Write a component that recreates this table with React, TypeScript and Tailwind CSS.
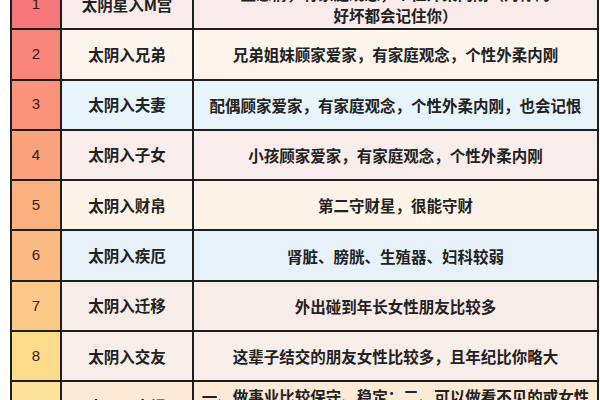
const rows = [
  {
    n: "1",
    num: "bg-[#f7787a]",
    bg: "bg-[#f9ebea]",
    name: "太阴星入M宫",
    desc: ["重感情，有家庭观念，个性外柔内刚（对你的", "好坏都会记住你）"],
  },
  { n: "2", num: "bg-[#f8877b]", bg: "bg-[#fdf4ed]", name: "太阴入兄弟", desc: ["兄弟姐妹顾家爱家，有家庭观念，个性外柔内刚"] },
  { n: "3", num: "bg-[#f9937a]", bg: "bg-[#e8f4fb]", name: "太阴入夫妻", desc: ["配偶顾家爱家，有家庭观念，个性外柔内刚，也会记恨"] },
  { n: "4", num: "bg-[#f9a27c]", bg: "bg-[#f8edeb]", name: "太阴入子女", desc: ["小孩顾家爱家，有家庭观念，个性外柔内刚"] },
  { n: "5", num: "bg-[#fbb07f]", bg: "bg-[#fdf3e8]", name: "太阴入财帛", desc: ["第二守财星，很能守财"] },
  { n: "6", num: "bg-[#fbbb82]", bg: "bg-[#e6f1fa]", name: "太阴入疾厄", desc: ["肾脏、膀胱、生殖器、妇科较弱"] },
  { n: "7", num: "bg-[#fcc887]", bg: "bg-[#f8ece9]", name: "太阴入迁移", desc: ["外出碰到年长女性朋友比较多"] },
  { n: "8", num: "bg-[#fbdc8a]", bg: "bg-[#f8eee9]", name: "太阴入交友", desc: ["这辈子结交的朋友女性比较多，且年纪比你略大"] },
  {
    n: "9",
    num: "bg-[#fce39c]",
    bg: "bg-[#fcead5]",
    name: "太阴入官禄",
    desc: ["一、做事业比较保守、稳定；二、可以做看不见的或女性", "相关的工作"],
  },
];

export default function App() {
  return (
    <div
      className="w-[600px] h-[400px] overflow-hidden bg-white"
      style={{ fontFamily: '"Noto Sans CJK SC", "Noto Sans", sans-serif' }}
    >
      <div className="ml-[10px] mr-[1px] -mt-[22px]">
        <table className="w-[589px] border-collapse table-fixed">
          <colgroup>
            <col className="w-[50px]" />
            <col className="w-[132px]" />
            <col />
          </colgroup>
          <tbody>
            {rows.map((r) => (
              <tr key={r.n} className="h-[50.3px]">
                <td
                  className={`${r.num} border-2 border-[#1e1e1e] text-center text-[15px] font-medium text-[#3a1a1a]`}
                  style={{ fontFamily: '"Liberation Sans", Arial, sans-serif' }}
                >
                  {r.n}
                </td>
                <td className={`${r.bg} border-2 border-[#1e1e1e] text-center text-[15.5px] font-bold text-[#222]`}>
                  {r.name}
                </td>
                <td className={`${r.bg} border-2 border-[#1e1e1e] px-1 text-center text-[15.5px] leading-[22px] font-bold text-[#222] whitespace-nowrap`}>
                  {r.desc.map((d, i) => (
                    <div key={i}>{d}</div>
                  ))}
                </td>
              </tr>
            ))}
          </tbody>
        </table>
      </div>
    </div>
  );
}
